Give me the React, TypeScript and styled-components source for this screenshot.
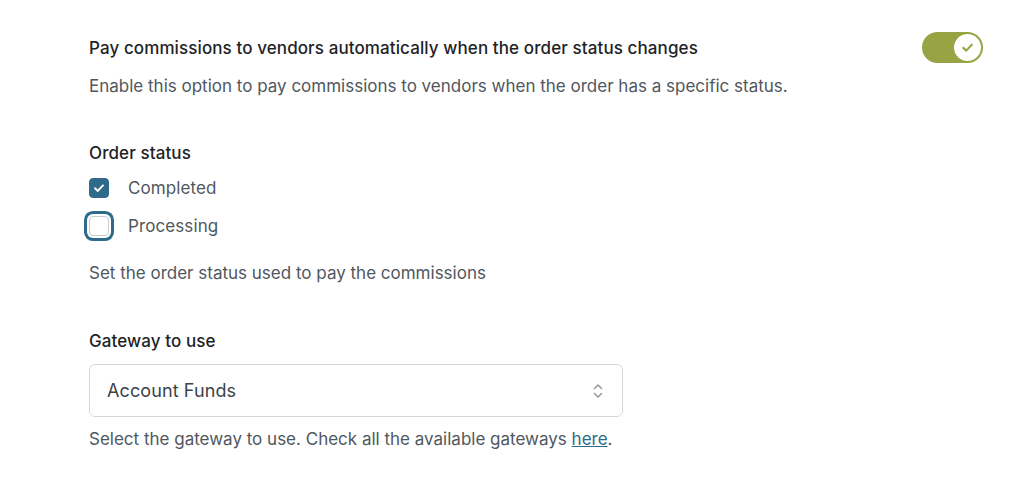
import styled, { createGlobalStyle } from "styled-components";

const GlobalStyle = createGlobalStyle`
  body {
    margin: 0;
    background: #ffffff;
    font-family: Inter, "Noto Sans", sans-serif;
    -webkit-font-smoothing: antialiased;
  }
`

const Page = styled.div`
  width: 1024px;
  height: 484px;
  box-sizing: border-box;
  padding: 32px 41px 0 89px;
  display: flex;
  flex-direction: column;
`

const Field = styled.div<{ $gap?: number }>`
  display: flex;
  flex-direction: column;
  margin-bottom: ${(p) => p.$gap ?? 0}px;
`

const HeadRow = styled.div`
  display: flex;
  align-items: center;
  justify-content: space-between;
  height: 31px;
`

const Title = styled.div`
  font-size: 17px;
  font-weight: 500;
  color: #1e2327;
  letter-spacing: 0.1px;
`

const Help = styled.div<{ $top?: number }>`
  font-size: 17px;
  color: #50575e;
  margin-top: ${(p) => p.$top ?? 0}px;
  line-height: 22px;
  letter-spacing: 0;

  a {
    color: #2e6a8a;
    text-decoration: underline;
  }
`

const Toggle = styled.div`
  width: 61px;
  height: 31px;
  border-radius: 16px;
  background: #98a343;
  display: flex;
  align-items: center;
  justify-content: flex-end;
  padding: 0 2px;
  box-sizing: border-box;
`

const Knob = styled.div`
  width: 27px;
  height: 27px;
  border-radius: 50%;
  background: #ffffff;
  display: flex;
  align-items: center;
  justify-content: center;
`

const Label = styled.div`
  font-size: 17px;
  font-weight: 500;
  color: #1e2327;
  line-height: 22px;
  letter-spacing: 0.1px;
`

const Options = styled.div`
  display: flex;
  flex-direction: column;
  gap: 18px;
  margin-top: 14px;
`

const Option = styled.label`
  display: flex;
  align-items: center;
  gap: 19px;
  height: 20px;
  font-size: 17px;
  color: #50575e;
  letter-spacing: 0.1px;
`

const Box = styled.span<{ $checked?: boolean; $focus?: boolean }>`
  width: 20px;
  height: 20px;
  box-sizing: border-box;
  border-radius: 4px;
  display: flex;
  align-items: center;
  justify-content: center;
  background: ${(p) => (p.$checked ? "#2e6a8a" : "#ffffff")};
  border: 1px solid ${(p) => (p.$checked ? "#2e6a8a" : "#c9ced3")};
  box-shadow: ${(p) =>
    p.$focus ? "0 0 0 2px #ffffff, 0 0 0 5px #2e6a8a" : "none"};
`

const Select = styled.div`
  margin-top: 12px;
  width: 534px;
  height: 53px;
  box-sizing: border-box;
  border: 1px solid #d6d9dc;
  border-radius: 6px;
  display: flex;
  align-items: center;
  justify-content: space-between;
  padding: 0 18px 0 17px;
  font-size: 18px;
  color: #3c434a;
  letter-spacing: 0.1px;
`

const Check = ({ size, color }: { size: number; color: string }) => (
  <svg width={size} height={size} viewBox="0 0 12 12" fill="none">
    <path
      d="M2.6 6.3 L5 8.5 L9.4 3.8"
      stroke={color}
      strokeWidth={1.7}
      strokeLinecap="round"
      strokeLinejoin="round"
    />
  </svg>
)

const Chevrons = () => (
  <svg width="12" height="18" viewBox="0 0 12 18" fill="none">
    <path d="M2.5 6.5 L6 3 L9.5 6.5" stroke="#8c9196" strokeWidth="1.4" strokeLinecap="round" strokeLinejoin="round" />
    <path d="M2.5 11.5 L6 15 L9.5 11.5" stroke="#8c9196" strokeWidth="1.4" strokeLinecap="round" strokeLinejoin="round" />
  </svg>
)

const App = () => {
  return (
    <>
      <GlobalStyle />
      <Page>
        <Field $gap={45}>
          <HeadRow>
            <Title>Pay commissions to vendors automatically when the order status changes</Title>
            <Toggle>
              <Knob>
                <Check size={15} color="#98a343" />
              </Knob>
            </Toggle>
          </HeadRow>
          <Help $top={12}>Enable this option to pay commissions to vendors when the order has a specific status.</Help>
        </Field>

        <Field $gap={46}>
          <Label>Order status</Label>
          <Options>
            <Option>
              <Box $checked>
                <Check size={14} color="#ffffff" />
              </Box>
              Completed
            </Option>
            <Option>
              <Box $focus />
              Processing
            </Option>
          </Options>
          <Help $top={26}>Set the order status used to pay the commissions</Help>
        </Field>

        <Field>
          <Label>Gateway to use</Label>
          <Select>
            <span>Account Funds</span>
            <Chevrons />
          </Select>
          <Help $top={11}>
            Select the gateway to use. Check all the available gateways <a>here</a>.
          </Help>
        </Field>
      </Page>
    </>
  );
}
export default App;
